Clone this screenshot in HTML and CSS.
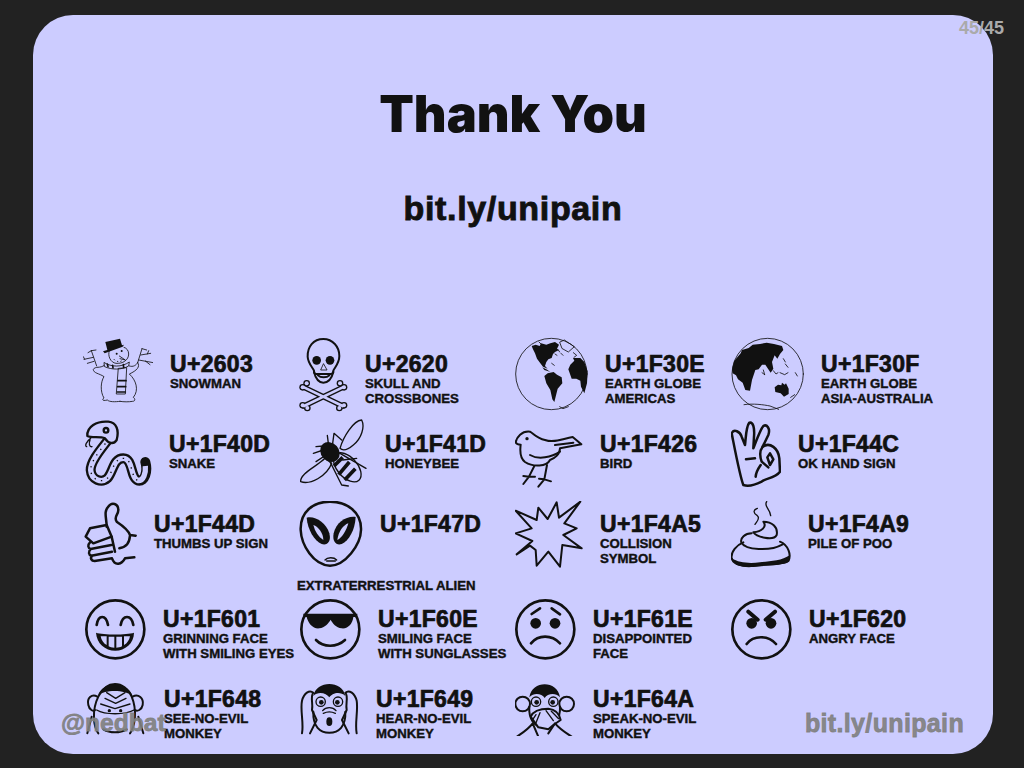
FILE: index.html
```html
<!DOCTYPE html>
<html lang="en">
<head>
<meta charset="utf-8">
<title>Thank You</title>
<link rel="stylesheet" href="styles.css">
</head>
<body>
<main class="slide">
  <h1 class="title">Thank You</h1>
  <p class="link">bit.ly/unipain</p>
  <section class="grid">

    <div class="cell r1">
      <svg class="icon thin" width="70" height="75" viewBox="39 21 210 225">
        <path class="f" d="M106 36L150 26L156 46L162 44L158 50L104 70L99 64L112 60Z"/>
        <path d="M118 62C112 78 122 98 138 100C158 102 176 90 176 72C176 62 170 54 162 52"/>
        <circle class="f" cx="140" cy="71" r="3"/><circle class="f" cx="155" cy="63" r="3"/>
        <path d="M148 78L166 90L150 86M132 88l2 2M142 94l2 1M152 94l2-1"/>
        <path d="M103 98C125 112 155 112 178 96L176 108C155 120 125 120 104 110Z"/>
        <path d="M146 115L170 113L166 192L140 192Z"/>
        <path class="thick" d="M144 152H168M143 170H167M142 186H166M112 102l2 8M128 106l1 8M160 104l1 8"/>
        <path d="M103 106C90 116 76 108 70 118C70 130 88 130 102 140C92 155 90 185 102 204C96 208 96 214 112 210C118 216 135 216 150 214M178 108C190 112 198 106 203 98M203 98C212 110 200 122 178 132C198 150 208 180 190 202C196 206 196 214 188 214C175 216 162 216 150 214"/>
        <path d="M80 108L64 62M70 82L42 88M64 62L54 68M64 62L78 60M72 94L52 100M44 88L40 80M203 98L216 56M212 75L242 70M216 56L230 60M206 90L250 98M226 93L240 104M232 72L236 62"/>
      </svg>
      <div class="text"><div class="code">U+2603</div><div class="name">SNOWMAN</div></div>
    </div>

    <div class="cell r1">
      <svg class="icon" width="49" height="75" viewBox="27 21 147 225">
        <path d="M100 27C70 27 52 50 53 80C54 100 68 112 72 122C72 128 74 132 78 132L122 132C128 132 130 128 130 122C134 112 148 100 148 78C148 50 128 27 100 27Z"/>
        <circle class="f" cx="80" cy="91" r="13"/><circle class="f" cx="120" cy="91" r="13"/>
        <path class="thin" d="M100 102L92 120L110 120Z"/>
        <path d="M72 126C78 150 90 158 100 158C112 158 124 150 130 126M84 136C92 144 110 144 118 136"/>
        <g class="bo"><path d="M42 172L158 228M158 172L42 228"/><circle cx="38" cy="172" r="10"/><circle cx="50" cy="160" r="10"/><circle cx="162" cy="172" r="10"/><circle cx="150" cy="160" r="10"/><circle cx="38" cy="226" r="10"/><circle cx="52" cy="234" r="10"/><circle cx="162" cy="226" r="10"/><circle cx="148" cy="234" r="10"/></g>
        <g class="bi"><path d="M42 172L158 228M158 172L42 228"/><circle cx="38" cy="172" r="6"/><circle cx="50" cy="160" r="6"/><circle cx="162" cy="172" r="6"/><circle cx="150" cy="160" r="6"/><circle cx="38" cy="226" r="6"/><circle cx="52" cy="234" r="6"/><circle cx="162" cy="226" r="6"/><circle cx="148" cy="234" r="6"/></g>
      </svg>
      <div class="text"><div class="code">U+2620</div><div class="name">SKULL AND<br>CROSSBONES</div></div>
    </div>

    <div class="cell r1">
      <svg class="icon thin" width="73" height="75" viewBox="30 21 219 225">
        <circle cx="139" cy="132" r="107"/>
        <path class="f" d="M80 48L92 44L104 48L108 40L124 44L136 40L150 36L162 44L156 56L162 60L150 66L144 72L140 84L130 88L124 96L120 108L128 116L114 110L106 100L96 86L90 70L84 58Z"/>
        <path class="f" d="M112 112L124 118L136 126L130 124L118 120Z"/>
        <path class="f" d="M118 138L128 130L146 126L156 134L170 142L172 160L158 176L154 192L148 216L142 208L136 180L124 160Z"/>
        <path class="f" d="M190 118L196 104L208 92L204 84L226 84L238 96L248 124L246 160L238 190L228 170L226 152L214 146L200 146Z"/>
        <path d="M165 36L178 30L208 50L190 66L172 56ZM205 68l10 8l-8 6M160 60l4 6M108 42l-6-6M140 100l8 6M190 230l-16 6l-10-6M150 72l6 4M168 70l6 6"/>
      </svg>
      <div class="text"><div class="code">U+1F30E</div><div class="name">EARTH GLOBE<br>AMERICAS</div></div>
    </div>

    <div class="cell r1">
      <svg class="icon thin" width="73" height="75" viewBox="33 21 219 225">
        <circle cx="143" cy="132" r="107"/>
        <path class="f" d="M36 120L42 94L62 70L66 60L86 54L98 44L120 42L140 38L162 42L186 48L190 60L180 72L172 86L164 76L156 96L160 116L152 128L144 116L136 104L126 104L116 118L106 120L96 150L90 182L76 180L68 158L54 148L48 136L38 130Z"/>
        <path class="f" d="M164 172L174 164L184 166L186 158L194 164L198 160L206 176L206 192L192 200L182 190L166 186Z"/>
        <path d="M72 224C100 220 130 224 150 228L176 238M160 122l8 10l6-4M180 128l14 6l10-6M212 202l12-8M130 120l4 14M196 102l8 10M226 128l6 10M190 86l6 10M126 128l8 6"/>
      </svg>
      <div class="text"><div class="code">U+1F30F</div><div class="name">EARTH GLOBE<br>ASIA-AUSTRALIA</div></div>
    </div>

    <div class="cell r2">
      <svg class="icon snake" width="69" height="70" viewBox="39 267 207 210">
        <path class="so" d="M118 325C100 350 62 390 62 420C64 450 95 460 112 445C130 425 130 385 160 385C190 385 180 445 205 452C224 455 234 425 226 396"/>
        <path class="si" d="M118 325C100 350 62 390 62 420C64 450 95 460 112 445C130 425 130 385 160 385C190 385 180 445 205 452C220 452 228 430 226 408"/>
        <path class="sd" d="M118 325C100 350 62 390 62 420C64 450 95 460 112 445C130 425 130 385 160 385C190 385 180 445 205 452"/>
        <path class="bg" d="M52 318C50 290 80 272 115 275C140 278 148 300 140 330C130 345 115 340 105 325C90 318 65 325 52 318Z"/>
        <circle cx="108" cy="301" r="7"/>
        <path class="thin3" d="M62 325C48 335 44 348 50 350M60 330C56 340 58 352 66 350"/>
      </svg>
      <div class="text"><div class="code">U+1F40D</div><div class="name">SNAKE</div></div>
    </div>

    <div class="cell r2">
      <svg class="icon thin3" width="69" height="70" viewBox="27 267 207 210">
        <path d="M150 355C160 320 190 272 215 270C225 290 215 325 190 345C175 358 160 365 150 355Z"/>
        <path d="M105 385C80 410 30 430 32 455C60 465 110 440 125 400Z"/>
        <ellipse class="bg" cx="172" cy="412" rx="52" ry="30" transform="rotate(48 172 412)"/>
        <path class="stripe" d="M158 382L132 408M178 396L146 434M196 416L164 450"/>
        <ellipse class="f" cx="120" cy="366" rx="32" ry="27" transform="rotate(48 120 366)"/>
        <path d="M100 348L78 350M100 360L70 370M108 375L78 395M120 395L155 465L175 468M150 370L228 415M158 390L200 385M115 340L112 316M128 340L132 310L155 330"/>
      </svg>
      <div class="text"><div class="code">U+1F41D</div><div class="name">HONEYBEE</div></div>
    </div>

    <div class="cell r2">
      <svg class="icon" width="68" height="70" viewBox="30 267 204 210">
        <path d="M32 337C35 322 50 302 75 305C85 310 95 325 120 330C150 340 175 325 203 321L229 343L165 355C165 372 150 385 135 390C125 410 85 412 60 396C45 385 45 360 47 344C40 344 34 342 32 337Z"/>
        <circle class="f" cx="66" cy="326" r="5"/>
        <path d="M75 375C100 390 140 382 165 365M150 345L205 338"/>
        <path d="M88 408L72 440L55 462M72 440L90 440M72 440L55 438M126 405L118 448L100 470M118 448L138 454M118 448L102 446"/>
      </svg>
      <div class="text"><div class="code">U+1F426</div><div class="name">BIRD</div></div>
    </div>

    <div class="cell r2">
      <svg class="icon hvy" width="50" height="70" viewBox="33 267 150 210">
        <path d="M70 465C60 440 45 360 35 310C42 295 60 305 65 320L75 345C78 320 78 290 88 278C100 275 104 295 102 320L100 355C110 330 120 300 130 288C140 282 152 295 145 315L128 350C150 335 175 355 178 385L180 425C165 445 135 445 125 455C105 465 85 470 70 465Z"/>
        <path d="M78 388L105 385M107 440C108 425 115 415 122 405M142 382L150 370L160 388L150 405ZM128 350C120 360 118 375 125 395L145 412"/>
      </svg>
      <div class="text"><div class="code">U+1F44C</div><div class="name">OK HAND SIGN</div></div>
    </div>

    <div class="cell r3">
      <svg class="icon hvy" width="54" height="68" viewBox="39 18 162 204">
        <path d="M110 95C110 70 100 50 115 35C125 20 145 25 145 45C145 60 130 65 140 80C155 90 175 105 180 120L197 122M180 122C178 145 170 155 148 160"/>
        <path d="M60 100L110 90L125 125L70 145L47 125Z"/>
        <path d="M60 142C52 150 54 160 62 162L124 150M62 162C54 170 56 180 64 182L126 170M66 182C60 190 64 198 74 198L126 190C135 215 155 208 165 190L193 187M125 125L135 170"/>
      </svg>
      <div class="text"><div class="code">U+1F44D</div><div class="name">THUMBS UP SIGN</div></div>
    </div>

    <div class="cell r3 wrap">
      <svg class="icon hvy" width="64" height="68" viewBox="27 18 192 204">
        <path d="M120 20C70 20 30 50 32 105C34 150 70 210 120 212C165 212 212 150 213 105C215 50 170 20 120 20Z"/>
        <path class="f" d="M50 68C75 62 108 82 118 115C125 142 110 152 95 147C73 137 53 105 50 68Z"/>
        <path class="f" d="M197 66C170 62 138 82 131 115C126 142 140 152 155 147C177 137 195 105 197 66Z"/>
        <path class="hl" d="M70 90C85 95 100 115 100 135C85 125 75 110 70 90Z"/>
        <path class="hl" d="M175 85C160 90 145 110 142 135C155 130 170 105 175 85Z"/>
        <path class="thin3" d="M105 195C112 186 132 186 140 195M110 198H136"/>
      </svg>
      <div class="text"><div class="code">U+1F47D</div></div>
      <div class="name below">EXTRATERRESTRIAL ALIEN</div>
    </div>

    <div class="cell r3">
      <svg class="icon" width="68" height="68" viewBox="30 18 204 204">
        <path d="M155 22L162 68L226 20L178 85L215 100L175 120L230 160L172 150L165 215L130 170L95 212L92 165L75 152L35 178L82 138L32 115L80 100L32 47L95 75L100 38L128 72Z"/>
      </svg>
      <div class="text"><div class="code">U+1F4A5</div><div class="name">COLLISION<br>SYMBOL</div></div>
    </div>

    <div class="cell r3">
      <svg class="icon" width="60" height="68" viewBox="33 18 180 204">
        <path class="thin3" d="M112 40C98 45 100 55 112 62C122 70 110 80 105 88M140 20C130 35 150 40 152 62"/>
        <path d="M70 142C50 150 32 170 35 190C40 210 70 215 100 212C140 208 190 210 205 198C215 180 205 150 180 140"/>
        <path class="f" d="M36 190C55 204 90 206 120 202C150 198 185 198 210 180L208 198C190 214 140 208 100 216C70 218 38 214 36 190Z"/>
        <path d="M95 115C75 115 60 130 64 142C75 165 150 170 188 148"/>
        <path d="M130 80C142 95 125 110 100 112C108 125 160 140 170 120C175 95 155 80 130 80Z"/>
      </svg>
      <div class="text"><div class="code">U+1F4A9</div><div class="name">PILE OF POO</div></div>
    </div>

    <div class="cell r4">
      <svg class="icon face" width="63" height="62" viewBox="39 312 189 186">
        <circle cx="136" cy="403" r="87"/>
        <path d="M80 390C85 358 108 358 114 390M152 390C158 358 184 358 190 390"/>
        <path class="f" d="M78 413C100 420 170 420 192 413C192 445 165 467 136 467C105 467 80 445 78 413Z"/>
        <path class="hl" d="M92 424H110V450C100 445 94 435 92 424ZM116 425H133V458C125 458 120 456 116 454ZM139 425H156V454C150 457 145 458 139 458ZM162 424H180C178 435 172 445 162 450Z"/>
      </svg>
      <div class="text"><div class="code">U+1F601</div><div class="name">GRINNING FACE<br>WITH SMILING EYES</div></div>
    </div>

    <div class="cell r4">
      <svg class="icon face" width="62" height="62" viewBox="27 312 186 186">
        <circle cx="121" cy="403" r="87"/>
        <path class="f" d="M40 356H202V366H190C188 385 175 402 155 400C138 398 128 385 122 374C115 385 105 398 88 400C68 402 55 385 50 366H40Z"/>
        <path d="M78 435C100 458 140 458 165 435"/>
      </svg>
      <div class="text"><div class="code">U+1F60E</div><div class="name">SMILING FACE<br>WITH SUNGLASSES</div></div>
    </div>

    <div class="cell r4">
      <svg class="icon face" width="61" height="62" viewBox="30 312 183 186">
        <circle cx="121" cy="403" r="87"/>
        <path d="M80 357L105 340M140 340L165 358"/>
        <circle class="f" cx="92" cy="385" r="16"/><circle class="f" cx="150" cy="385" r="16"/>
        <path d="M78 445C100 418 140 418 165 445"/>
      </svg>
      <div class="text"><div class="code">U+1F61E</div><div class="name">DISAPPOINTED<br>FACE</div></div>
    </div>

    <div class="cell r4">
      <svg class="icon face" width="61" height="62" viewBox="33 312 183 186">
        <circle cx="124" cy="403" r="87"/>
        <path class="wide" d="M85 350L113 374M165 350L137 374"/>
        <circle class="f" cx="95" cy="385" r="16"/><circle class="f" cx="153" cy="385" r="16"/>
        <path d="M80 447C100 420 145 420 168 447"/>
      </svg>
      <div class="text"><div class="code">U+1F620</div><div class="name">ANGRY FACE</div></div>
    </div>

    <div class="cell r5">
      <svg class="icon" width="64" height="54" viewBox="99 36 192 162">
        <path d="M145 190C130 170 125 120 145 80C160 50 180 42 195 42C215 42 235 55 245 80C262 120 255 170 240 190"/>
        <path class="f" d="M144 76C158 32 232 32 248 78C225 58 165 58 144 76Z"/>
        <path d="M142 80C125 70 110 85 115 105C118 120 130 125 135 120M248 80C265 70 282 85 278 105C275 120 262 125 255 120"/>
        <path class="thin3" d="M170 68L197 85L225 68M165 85L197 100L228 85M152 102L195 116L240 102M140 120C165 135 225 135 252 120"/>
        <circle class="f" cx="178" cy="122" r="5"/><circle class="f" cx="212" cy="122" r="5"/>
        <path d="M112 190L125 140M280 190L265 140M160 178C180 190 210 190 230 178"/>
      </svg>
      <div class="text"><div class="code">U+1F648</div><div class="name">SEE-NO-EVIL<br>MONKEY</div></div>
    </div>

    <div class="cell r5">
      <svg class="icon" width="60" height="54" viewBox="27 36 180 162">
        <path class="f" d="M70 78C78 30 158 30 166 78C150 62 125 70 118 82C110 70 85 62 70 78Z"/>
        <circle class="thin3" cx="92" cy="95" r="14"/><circle class="thin3" cx="144" cy="95" r="14"/>
        <circle class="f" cx="94" cy="97" r="7"/><circle class="f" cx="142" cy="97" r="7"/>
        <path class="thin3" d="M98 122C108 110 128 110 138 122M100 130C112 124 124 124 136 130"/>
        <path d="M70 125C68 170 90 188 118 188C146 188 168 170 166 125"/>
        <ellipse class="f" cx="118" cy="155" rx="9" ry="13"/>
        <path d="M36 190C42 160 30 120 36 92C42 70 58 58 70 68C60 80 70 100 66 120L80 150L60 190M200 190C194 160 205 120 200 92C194 70 178 58 166 68C176 80 166 100 170 120L156 150L176 190"/>
      </svg>
      <div class="text"><div class="code">U+1F649</div><div class="name">HEAR-NO-EVIL<br>MONKEY</div></div>
    </div>

    <div class="cell r5">
      <svg class="icon" width="61" height="54" viewBox="675 36 183 162">
        <circle cx="698" cy="102" r="22"/><circle cx="830" cy="102" r="22"/>
        <path d="M718 110C715 150 735 170 760 172C790 172 812 150 810 110"/>
        <path class="f" d="M718 82C726 30 802 30 810 82C795 66 772 72 764 84C756 72 733 66 718 82Z"/>
        <circle class="thin3" cx="738" cy="95" r="14"/><circle class="thin3" cx="790" cy="95" r="14"/>
        <circle class="f" cx="740" cy="97" r="7"/><circle class="f" cx="788" cy="97" r="7"/>
        <path class="bg" d="M722 140C730 122 750 116 775 116C795 118 808 130 812 150L790 165L775 178L745 172Z"/>
        <path class="thin3" d="M738 134L726 152M750 128L738 158M768 122L790 152M784 124L806 146"/>
        <path d="M678 202C695 190 715 178 728 160L745 200M845 200C830 190 810 178 795 160L775 190"/>
      </svg>
      <div class="text"><div class="code">U+1F64A</div><div class="name">SPEAK-NO-EVIL<br>MONKEY</div></div>
    </div>

  </section>
  <span class="mark handle">@nedbat</span>
  <span class="mark short">bit.ly/unipain</span>
</main>
<span class="page">45/45</span>
</body>
</html>
```
FILE: styles.css
```css
html, body { margin: 0; height: 100%; }
body {
  background: #222;
  overflow: hidden;
  color: #111;
  font-family: "Liberation Sans", Arial, sans-serif;
  font-weight: 700;
}
.slide {
  position: relative;
  box-sizing: border-box;
  width: 960px;
  height: 739px;
  margin: 15px 0 0 33px;
  padding: 69px 0 0 50px;
  background: #ccf;
  border-radius: 40px;
}
.title {
  margin: 0 0 0 -50px;
  font-family: Inter, "Liberation Sans", sans-serif;
  font-size: 50.5px;
  line-height: 60px;
  font-weight: 900;
  text-align: center;
}
.link {
  margin: 44px 0 0 -50px;
  font-size: 34px;
  line-height: 40px;
  letter-spacing: .65px;
  text-align: center;
  -webkit-text-stroke: .9px #111;
}
.grid {
  display: grid;
  grid-template-columns: repeat(4, 216px);
  grid-template-rows: 80px 80px 95px 80px 80px;
  margin-top: 109px;
}
.cell { display: flex; align-items: flex-start; gap: 17px; }
.wrap { flex-wrap: wrap; row-gap: 9px; }
.icon {
  flex: none;
  fill: none;
  stroke: #111;
  stroke-width: 6;
  stroke-linecap: round;
  stroke-linejoin: round;
}
.r2 .icon { margin-top: 2px; }
.r3 .icon { margin-top: 4px; }
.r4 .icon { margin-top: 7px; }
.r5 .icon { margin-top: 10px; }
.icon .f { fill: #111; stroke: none; }
.icon .bg { fill: #ccf; }
.icon .hl { fill: #ccf; stroke: none; }
.icon.thin, .icon .thin { stroke-width: 2.5; }
.icon.thin3, .icon .thin3 { stroke-width: 4; }
.icon.hvy { stroke-width: 7.5; }
.icon .thick { stroke-width: 5; }
.icon.face { stroke-width: 8; }
.icon .wide { stroke-width: 12; }
.icon .stripe { stroke-width: 11; stroke-linecap: butt; }
.icon .bo { stroke-width: 16; fill: #111; }
.icon .bo circle { stroke: none; }
.icon .bi { stroke: #ccf; stroke-width: 8; fill: #ccf; }
.icon .bi circle { stroke: none; }
.icon.snake { stroke-width: 7; }
.icon .so { stroke-width: 30; }
.icon .si { stroke: #ccf; stroke-width: 16; stroke-linecap: butt; }
.icon .sd { stroke-width: 4; stroke-dasharray: 4 16; stroke-linecap: butt; }
.text { padding-top: 15px; }
.code {
  font-size: 23px;
  line-height: 24px;
  letter-spacing: .3px;
  -webkit-text-stroke: .7px #111;
}
.name {
  font-size: 13.2px;
  line-height: 15px;
  -webkit-text-stroke: .4px #111;
  white-space: nowrap;
}
.below { flex-basis: 100%; margin-left: -2px; }
.mark {
  position: absolute;
  font-size: 25px;
  line-height: 30px;
  color: rgba(128, 128, 128, .92);
  -webkit-text-stroke: .8px rgba(128, 128, 128, .92);
}
.handle { left: 28px; top: 693px; font-size: 24.6px; }
.short { right: 29px; top: 693px; letter-spacing: .35px; }
.page {
  position: absolute;
  top: 18px;
  right: 20px;
  font-size: 18px;
  line-height: 20px;
  color: #aaa;
}
```
